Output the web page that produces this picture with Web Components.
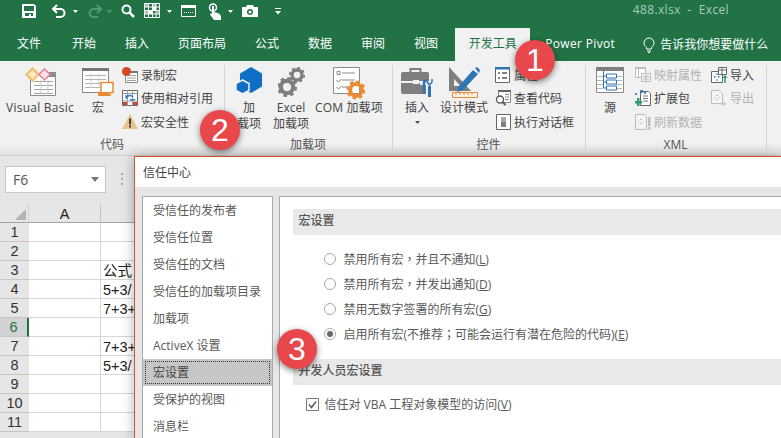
<!DOCTYPE html>
<html lang="zh-CN">
<head>
<meta charset="utf-8">
<title>488.xlsx - Excel</title>
<style>
    html, body {
        margin: 0;
        width: 781px;
        height: 438px;
        overflow: hidden;
        background: #e6e6e6;
        font-family: "Open Sans", "Noto Sans CJK SC", sans-serif;
        font-size: 12px;
    }
    .ribbon {
        display: flex;
        height: 94px;
        background: #f1f1f1;
    }
</style>
</head>
<body>
<xl-titlebar></xl-titlebar>
<xl-tabs></xl-tabs>
<div class="ribbon">
    <xl-group label="代码" style="width:224px">
        <xl-big icon="vb" w="68" style="margin-left:6px;letter-spacing:.25px">Visual Basic</xl-big>
        <xl-big icon="macro" w="32" style="margin-left:8px">宏</xl-big>
        <xl-col style="margin-left:8px">
            <xl-small icon="record">录制宏</xl-small>
            <xl-small icon="relative">使用相对引用</xl-small>
            <xl-small icon="warn">宏安全性</xl-small>
        </xl-col>
    </xl-group>
    <xl-group label="加载项" style="width:168px" sep>
        <xl-big icon="hex" w="40" style="margin-left:5px">加<br>载项</xl-big>
        <xl-big icon="gears" w="44">Excel<br>加载项</xl-big>
        <xl-big icon="com" w="70" style="margin-left:1px;letter-spacing:.15px">COM 加载项</xl-big>
    </xl-group>
    <xl-group label="控件" style="width:193px" sep>
        <xl-big icon="toolbox" w="40" caret style="margin-left:5px">插入</xl-big>
        <xl-big icon="design" w="48" style="margin-left:3px">设计模式</xl-big>
        <xl-col style="margin-left:7px">
            <xl-small icon="props">属性</xl-small>
            <xl-small icon="viewcode">查看代码</xl-small>
            <xl-small icon="dialog">执行对话框</xl-small>
        </xl-col>
    </xl-group>
    <xl-group label="XML" style="width:181px" sep>
        <xl-big icon="source" w="40" style="margin-left:5px">源</xl-big>
        <xl-col style="margin-left:5px;width:76px">
            <xl-small icon="mapprops" off>映射属性</xl-small>
            <xl-small icon="pack">扩展包</xl-small>
            <xl-small icon="refresh" off>刷新数据</xl-small>
        </xl-col>
        <xl-col>
            <xl-small icon="import">导入</xl-small>
            <xl-small icon="export" off>导出</xl-small>
        </xl-col>
    </xl-group>
    <xl-group style="flex:1" sep></xl-group>
</div>
<xl-sheet></xl-sheet>
<xl-trust-dialog></xl-trust-dialog>
<xl-badge n="1" style="left:515px;top:40px"></xl-badge>
<xl-badge n="2" style="left:200px;top:110px"></xl-badge>
<xl-badge n="3" style="left:277px;top:329px"></xl-badge>

<script>
const gear = (cx, cy, r, c) => `<circle cx="${cx}" cy="${cy}" r="${r * 0.62}" fill="none" stroke="${c}" stroke-width="${r * 0.42}"/><circle cx="${cx}" cy="${cy}" r="${r * 0.86}" fill="none" stroke="${c}" stroke-width="${r * 0.3}" stroke-dasharray="${r * 0.338} ${r * 0.338}"/>`;
const lines = (x, y, w, n, step, c) => Array.from({ length: n }, (_, i) => `<path d="M${x} ${y + i * step + .5}h${w}" stroke="${c}"/>`).join('');

const ICONS = {
    save: [14, 14, `<path fill="#fff" fill-rule="evenodd" d="M0 0h12l2 2v12H0zM2 2v5h10V2zM3 9v3h8V9zM7 10h2v2H7z"/>`],
    undo: [16, 14, `<path d="M6 1 2 5l4 4" fill="none" stroke="#fff" stroke-width="2"/><path d="M2 5h7.500a4 4 0 0 1 0 8H5" fill="none" stroke="#fff" stroke-width="2"/>`],
    redo: [16, 14, `<path d="m10 1 4 4-4 4" fill="none" stroke="#4f9a72" stroke-width="2"/><path d="M14 5H6.500a4 4 0 0 0 0 8H11" fill="none" stroke="#4f9a72" stroke-width="2"/>`],
    caret: [5, 3, `<path d="M0 0h5L2.500 3z" fill="#fff"/>`],
    caretDim: [5, 3, `<path d="M0 0h5L2.500 3z" fill="#4f9a72"/>`],
    search: [14, 14, `<circle cx="5.500" cy="5.500" r="4" fill="none" stroke="#fff" stroke-width="2"/><path d="m8.500 8.500 4.500 4.500" stroke="#fff" stroke-width="2.500"/>`],
    gridq: [16, 15, `<path fill="none" stroke="#fff" d="M.5.500h15v14H.5zM4.500.5v14M8.500.5v14M12 .5v14M.5 4h15M.5 7.500h15M.5 11h15"/><path fill="#fff" d="M5 8h3v3H5zM9 4h3v3H9z"/><path fill="#fff" opacity=".55" d="M1 1h3v3H1zM9 1h3v3H9zM13 8h2v3h-2zM1 8h3v3H1z"/>`],
    form: [15, 12, `<path fill="none" stroke="#fff" d="M.5.500h14v11H.5z"/><path fill="#fff" d="M0 0h15v3H0z"/><path d="M3 7.500h9" stroke="#fff" stroke-dasharray="1 1"/>`],
    touch: [13, 17, `<circle cx="5" cy="4.500" r="3.500" fill="none" stroke="#fff" stroke-width="1.500"/><path fill="#fff" d="M4 3h2v6l5 1.500L13 13v4H6L2 11.500 3 10l1 1z"/>`],
    camera: [16, 12, `<path fill="#fff" fill-rule="evenodd" d="M0 2h4l1-2h6l1 2h4v10H0zM8 4a3 3 0 1 0 0 6 3 3 0 0 0 0-6zM8 5.500a1.500 1.500 0 1 1 0 3 1.500 1.500 0 0 1 0-3z"/>`],
    custom: [6, 7, `<path fill="#fff" d="M0 0h6v1H0zM0 3h6L3 6.500z"/>`],
    bulb: [12, 16, `<path d="M3.500 10.500C2 9 1 8 1 6a5 5 0 0 1 10 0c0 2-1 3-2.500 4.500v1.500h-5zM4 14h4M5 15.500h2" fill="none" stroke="#fff"/>`],
    vb: [31, 29, `<path fill="#fff" stroke="#8b8b8b" d="M5.500 6.500h25v22h-25z"/><path fill="#8b8b8b" d="M22 5h9v5h-9z"/>${lines(9, 14, 19, 4, 4, '#a5a5a5')}<path d="M16 13v14M23 13v14" stroke="#c8c8c8"/><path fill="#f6d595" stroke="#edb962" stroke-width="1.500" d="M7.500 1 14 7.500 7.500 14 1 7.500z"/><path fill="#fff" d="M7.500 4 11 7.500 7.500 11 4 7.500z" opacity=".55"/><path fill="#fbe1e8" stroke="#e57f9b" stroke-width="1.500" d="M19.500 2 25 7.500 19.500 13 14 7.500z"/>`],
    macro: [32, 29, `<path fill="#fff" stroke="#8b8b8b" d="M.5 1.500h26v24H.5z"/><path fill="#777" d="M0 1h27v3H0z"/>${lines(3, 8, 21, 4, 4, '#b0b0b0')}<path d="M9 7v14M17 7v14" stroke="#d0d0d0"/><path fill="#fff" stroke="#ea8a35" stroke-width="1.500" d="M19 15.500h12v10h-3v3H17v-3h2z"/><path fill="#ea8a35" d="M16 25h11v4H16z"/>`],
    record: [16, 16, `<path fill="#fff" stroke="#8b8b8b" d="M3.500 4.500h12v11h-12z"/><path fill="#777" d="M8 4h8v2H8z"/>${lines(5, 8, 9, 3, 2.500, '#a0a0a0')}<circle cx="4.500" cy="4.500" r="4.500" fill="#d24726"/>`],
    relative: [16, 16, `<path fill="#fff" stroke="#666" d="M.5.500h15v15H.5z"/><path d="M5.500 0v16M10.500 0v16M0 3.500h16M0 11h16" stroke="#9a9a9a"/><path d="M4 8.500a4 4 0 0 1 7-1.500" fill="none" stroke="#2b7cd3" stroke-width="1.500"/><path fill="#2b7cd3" d="m3 5 4 1-3 3zM8 9h5v1.500H8z"/><path fill="#d24726" d="M1 12h4v3H1zM11 12h4v3h-4z"/>`],
    warn: [16, 15, `<path fill="#eac38a" d="M8 0 16 15H0z"/><path fill="#3c3c3c" d="M7 4.500h2v6H7zM7 11.500h2v2H7z"/>`],
    hex: [27, 27, `<path fill="#0f6fc6" d="M15 0 26 6.500v13L15 26 4 19.500v-13z"/><path fill="#0f6fc6" stroke="#f1f1f1" stroke-width="1.500" d="M6.500 13 13 16.500v7L6.500 27 0 23.500v-7z"/>`],
    gears: [27, 30, gear(19, 8, 8, '#7f7f7f') + gear(9, 20, 10, '#7f7f7f')],
    com: [32, 33, `<path fill="#fff" stroke="#8b8b8b" d="M.5.500h26v26H.5z"/><path d="M4 4.500h3v3H4z" fill="none" stroke="#8b8b8b"/><path d="M9 6h13M9 13h13M9 20h6" stroke="#8b8b8b"/><path d="m3.500 13 2 2 3-3M3.500 20l2 2 3-3" fill="none" stroke="#7f7f7f"/>${gear(23, 23, 9.500, '#ea8a35')}`],
    toolbox: [32, 31, `<path d="M9.500 5V2h10v3" fill="none" stroke="#7f7f7f" stroke-width="2"/><path fill="#7f7f7f" d="M2 5h25a2 2 0 0 1 1 2v7H0V7a2 2 0 0 1 2-2zM0 16h19v2h6v9H2a2 2 0 0 1-2-2z"/><path fill="#f1f1f1" d="M12 13h6v4h-6z"/><path d="M23 15v12" stroke="#2e75b6" stroke-width="2.500"/><path d="M22 14h3" stroke="#2e75b6" stroke-width="2"/><path d="M28.500 19v11" stroke="#2e75b6" stroke-width="3"/><path d="M26 12v3l2.500 3 2.500-3v-3" fill="none" stroke="#2e75b6" stroke-width="1.500"/>`],
    design: [31, 32, `<path fill="#7f7f7f" fill-rule="evenodd" d="M0 0 22 24H0zM5 12v7h6.500z"/><path fill="#2e75b6" d="m24 3 5 4-15 16-6 2 2-6z"/><path fill="#2e75b6" d="m26 1 2-1 3 3-1 3z"/><path fill="#f9f2e7" stroke="#ea8a35" d="M3.500 25.500h25v5h-25z"/><path d="M7 26v2M11 26v2M15 26v2M19 26v2M23 26v2" stroke="#ea8a35"/>`],
    props: [16, 16, `<path fill="#fff" stroke="#666" d="M.5.500h14v15H.5z"/><path fill="#2e75b6" d="M0 0h15v2.500H0z"/><path d="M3 6h2M3 11h2M7 6h5M7 11h5" stroke="#555" stroke-width="1.500"/>`],
    viewcode: [16, 16, `<path fill="#fff" stroke="#888" d="M3.500 .5h12v12h-12z"/><path fill="#666" d="M3 0h13v2H3z"/>${lines(10, 4, 4, 3, 2.500, '#888')}<circle cx="5" cy="9.500" r="3.500" fill="#fff" stroke="#555" stroke-width="1.300"/><path d="m7.500 12 3 3" stroke="#555" stroke-width="2"/>`],
    dialog: [15, 16, `<path fill="#fff" stroke="#666" d="M.5.500h14v15H.5z"/><path fill="#a9a9a9" d="M5 3h5v5H5z"/><path fill="#7f7f7f" d="M5 8h5v5H5z"/>`],
    source: [28, 26, `<path fill="#fff" stroke="#8b8b8b" d="M.5.500h27v25H.5z"/><path fill="#7f7f7f" d="M0 0h28v4H0z"/>${lines(19, 9, 7, 4, 4, '#b5b5b5')}${lines(1, 9, 6, 4, 4, '#b5b5b5')}<path d="M7.500 4v17M7.500 9H11M7.500 15H11M7.500 21H11" stroke="#2e75b6" fill="none"/><path d="M10.500 7h10v4h-10zM10.500 13h10v4h-10zM10.500 19h10v4h-10z" fill="#fff" stroke="#2e75b6"/>`],
    mapprops: [16, 15, `<path fill="#fff" stroke="#bdbdbd" d="M.5.500h10v10H.5z"/><path fill="#bdbdbd" d="M0 0h11v2H0z"/><path d="M3.500 2v8" stroke="#bdbdbd"/><path fill="#f1f1f1" stroke="#bdbdbd" d="M6.500 6.500h9v8h-9z"/><path d="M8 9.500h6M8 12h6M11 7v7" stroke="#bdbdbd"/>`],
    pack: [16, 16, `<path fill="#fff" stroke="#666" d="M5.500 1.500h8l2 2v12h-10z"/><path d="M8 6h5M8 8.500h5M8 11h5" stroke="#777"/><path fill="#2e75b6" d="M5 0h3v3H5zM0 3h2v2H0zM9 2h2v2H9z" opacity=".85"/><path fill="#2f9e6e" d="M2 8h2.500v3H7v2.500H4.500V16H2v-2.500H0V11h2z"/>`],
    refresh: [16, 16, `<path fill="#f4f4f4" stroke="#bdbdbd" d="M.5.500h9l2 2v13H.5z"/><path fill="#bdbdbd" d="M3 7h1v1H3zM8 7h1v1H8zM5 5h2v1H5zM5 9h2v1H5z"/><path fill="#bdbdbd" d="M13 3h2.500v9H13zM13 13h2.500v2.500H13z"/>`],
    import: [17, 16, `<path fill="#fff" stroke="#666" d="M.5 4.500h11v11H.5z"/><path fill="#2e75b6" d="M3 9h1.500v1.500H3zM7 9h1.500v1.500H7z"/><path d="M5 7h2M5 13h2" stroke="#2e75b6"/><path fill="#fff" stroke="#666" d="M7.500 .5h8v7h-8z"/><path d="M7 3h9M11 1v6" stroke="#666"/><path d="M14 16v-6" stroke="#2f9e6e" stroke-width="1.500"/><path fill="#2f9e6e" d="m11.500 11 2.500-3 2.500 3z"/>`],
    export: [16, 16, `<path fill="#f4f4f4" stroke="#bdbdbd" d="M.5.500h8l3 3v10H.5z"/><path fill="#bdbdbd" d="M3 7h1v1H3zM8 7h1v1H8zM5 5h2v1H5zM5 9h2v1H5z"/><path d="M8 14h6M12 11.500 14.500 14 12 16.500" fill="none" stroke="#bdbdbd"/>`]
};

const svgIcon = (name) => {
    const [w, h, body] = ICONS[name];
    return `<svg xmlns="http://www.w3.org/2000/svg" width="${w}" height="${h}" viewBox="0 0 ${w} ${h}" style="display:block;flex:none">${body}</svg>`;
};

class XlTitlebar extends HTMLElement {
    constructor() {
        super();
        this.attachShadow({ mode: 'open' });
    }

    connectedCallback() {
        const item = (name, left, top) => `<span style="margin-left:${left}px;margin-top:${top}px">${svgIcon(name)}</span>`;
        this.shadowRoot.innerHTML = `
            <style>
                :host {
                    display: flex;
                    align-items: flex-start;
                    height: 28px;
                    background: #217346;
                }
                span { display: block; flex: none; }
                .title {
                    margin-left: auto;
                    margin-right: 52px;
                    line-height: 19px;
                    color: #a9cbb8;
                    white-space: pre;
                    letter-spacing: .35px;
                }
            </style>
            ${item('save', 22, 4)}${item('undo', 15, 4)}${item('caret', 6, 10)}
            ${item('redo', 9, 4)}${item('caretDim', 4, 10)}${item('search', 9, 4)}
            ${item('gridq', 9, 3)}${item('caret', 7, 10)}${item('form', 9, 5)}
            ${item('touch', 12, 3)}${item('caret', 7, 10)}${item('camera', 9, 5)}
            ${item('custom', 17, 8)}
            <span class="title">488.xlsx  -  Excel</span>
        `;
    }
}

class XlTabs extends HTMLElement {
    constructor() {
        super();
        this.attachShadow({ mode: 'open' });
    }

    connectedCallback() {
        const names = ['文件', '开始', '插入', '页面布局', '公式', '数据', '审阅', '视图'];
        this.shadowRoot.innerHTML = `
            <style>
                :host {
                    display: flex;
                    height: 33px;
                    background: #217346;
                    color: #fff;
                    line-height: 32px;
                    padding-left: 2.5px;
                }
                div { padding: 0 14.5px; flex: none; }
                .first { margin-right: 2px; }
                .active {
                    margin: 0 0 0 2.5px;
                    padding: 0 13.5px;
                    background: #f1f1f1;
                    color: #217346;
                }
                .pivot { padding: 0 0 0 15px; letter-spacing: .35px; }
                .tell {
                    display: flex;
                    align-items: center;
                    gap: 5px;
                    margin-left: 28px;
                    padding: 0;
                }
            </style>
            ${names.map((n, i) => `<div class="${i ? '' : 'first'}">${n}</div>`).join('')}
            <div class="active">开发工具</div>
            <div class="pivot">Power Pivot</div>
            <div class="tell">${svgIcon('bulb')}<span>告诉我你想要做什么</span></div>
        `;
    }
}

class XlGroup extends HTMLElement {
    constructor() {
        super();
        this.attachShadow({ mode: 'open' });
    }

    connectedCallback() {
        this.shadowRoot.innerHTML = `
            <style>
                :host {
                    display: flex;
                    flex-direction: column;
                    flex: none;
                    padding-top: 5px;
                    box-sizing: border-box;
                    color: #444;
                    background: linear-gradient(#f1f1f1 88%, #e4e4e4);
                    position: relative;
                }
                :host([sep])::before {
                    content: "";
                    display: block;
                    position: absolute;
                    left: 0;
                    top: 4px;
                    bottom: 5px;
                    width: 1px;
                    background: #d4d4d4;
                }
                .body { display: flex; height: 71px; }
                .label { height: 16px; line-height: 16px; text-align: center; color: #555; }
            </style>
            <div class="body"><slot></slot></div>
            <div class="label">${this.getAttribute('label') || ''}</div>
        `;
    }
}

class XlBig extends HTMLElement {
    constructor() {
        super();
        this.attachShadow({ mode: 'open' });
    }

    connectedCallback() {
        const caret = this.hasAttribute('caret')
            ? `<svg width="5" height="3" style="display:block;margin-top:5px"><path d="M0 0h5L2.500 3z" fill="#555"/></svg>` : '';
        this.shadowRoot.innerHTML = `
            <style>
                :host {
                    display: flex;
                    flex-direction: column;
                    align-items: center;
                    flex: none;
                    width: ${this.getAttribute('w')}px;
                    text-align: center;
                    white-space: nowrap;
                    line-height: 16px;
                }
                .icon {
                    height: 34px;
                    display: flex;
                    align-items: flex-start;
                    padding-top: 1px;
                    box-sizing: border-box;
                }
            </style>
            <div class="icon">${svgIcon(this.getAttribute('icon'))}</div>
            <div><slot></slot></div>
            ${caret}
        `;
    }
}

class XlCol extends HTMLElement {
    constructor() {
        super();
        this.attachShadow({ mode: 'open' });
        this.shadowRoot.innerHTML = `
            <style>
                :host { display: flex; flex-direction: column; flex: none; margin-top: -3px; }
            </style>
            <slot></slot>
        `;
    }
}

class XlSmall extends HTMLElement {
    constructor() {
        super();
        this.attachShadow({ mode: 'open' });
    }

    connectedCallback() {
        this.shadowRoot.innerHTML = `
            <style>
                :host {
                    display: flex;
                    align-items: center;
                    height: 23.5px;
                    gap: 3px;
                    white-space: nowrap;
                }
                :host([off]) { color: #b3b3b3; }
                .icon { width: 16px; display: flex; justify-content: center; flex: none; }
            </style>
            <span class="icon">${svgIcon(this.getAttribute('icon'))}</span>
            <slot></slot>
        `;
    }
}

class XlSheet extends HTMLElement {
    constructor() {
        super();
        this.attachShadow({ mode: 'open' });
    }

    connectedCallback() {
        const cells = { 3: '公式', 4: '5+3/', 5: '7+3+', 7: '7+3+', 8: '5+3/' };
        let rows = '';
        for (let r = 1; r <= 11; r++) {
            rows += `<div class="rh${r === 6 ? ' sel' : ''}">${r}</div><div class="c"></div><div class="c t">${cells[r] || ''}</div>`;
        }
        this.shadowRoot.innerHTML = `
            <style>
                :host {
                    display: block;
                    height: 283px;
                    overflow: hidden;
                    background: #e6e6e6;
                    border-top: 1px solid #cfcfcf;
                    box-sizing: border-box;
                    font-family: "Liberation Sans", "Noto Sans CJK SC", sans-serif;
                    color: #222;
                }
                .bar {
                    display: flex;
                    align-items: flex-start;
                    height: 48px;
                    padding: 10px 0 0 5px;
                    box-sizing: border-box;
                }
                .name {
                    display: flex;
                    align-items: center;
                    justify-content: space-between;
                    width: 101px;
                    height: 27px;
                    box-sizing: border-box;
                    padding: 0 5px 0 7px;
                    background: #fff;
                    border: 1px solid #c6c6c6;
                    color: #555;
                    font: 14px "Open Sans", sans-serif;
                }
                .name i {
                    border: 4px solid transparent;
                    border-top: 5px solid #777;
                    border-bottom: 0;
                    margin-right: 1px;
                }
                .dots {
                    margin: 7px 0 0 15px;
                    width: 2px;
                    height: 12px;
                    background: repeating-linear-gradient(#aaa 0 2px, transparent 2px 5px);
                }
                .grid {
                    display: grid;
                    grid-template-columns: 29px 72px 100px;
                    grid-auto-rows: 19px;
                    background: #fff;
                    width: 201px;
                }
                .corner, .ch {
                    height: 19px;
                    box-sizing: border-box;
                    background: #e6e6e6;
                    border-bottom: 1px solid #a5a5a5;
                }
                .corner { display: flex; justify-content: flex-end; align-items: flex-end; border-right: 1px solid #d0d0d0; }
                .corner svg { display: block; margin: 0 2px 2px 0; }
                .ch {
                    text-align: center;
                    line-height: 20px;
                    font-size: 14.5px;
                    border-right: 1px solid #c4c4c4;
                }
                .rh {
                    background: #e6e6e6;
                    border-bottom: 1px solid #c6c6c6;
                    box-sizing: border-box;
                    text-align: center;
                    line-height: 19px;
                    font-size: 14.5px;
                    color: #333;
                }
                .sel {
                    background: #d2d2d2;
                    color: #217346;
                    border-right: 2px solid #217346;
                }
                .c {
                    border-right: 1px solid #d6d6d6;
                    border-bottom: 1px solid #d6d6d6;
                    box-sizing: border-box;
                }
                .t {
                    font-size: 14.5px;
                    line-height: 20px;
                    padding-left: 2px;
                    white-space: nowrap;
                    overflow: hidden;
                }
            </style>
            <div class="bar">
                <div class="name"><span>F6</span><i></i></div>
                <div class="dots"></div>
            </div>
            <div class="grid">
                <div class="corner"><svg width="11" height="11"><path d="M11 0v11H0z" fill="#b5b5b5"/></svg></div>
                <div class="ch">A</div>
                <div class="ch"></div>
                ${rows}
            </div>
        `;
    }
}

class XlTrustDialog extends HTMLElement {
    constructor() {
        super();
        this.attachShadow({ mode: 'open' });
    }

    connectedCallback() {
        const nav = ['受信任的发布者', '受信任位置', '受信任的文档', '受信任的加载项目录', '加载项', 'ActiveX 设置', '宏设置', '受保护的视图', '消息栏'];
        const p = (c) => `<span class="tc" lang="zh-Hant">${c}</span>`;
        this.shadowRoot.innerHTML = `
            <style>
                :host {
                    display: block;
                    position: absolute;
                    left: 134px;
                    top: 156px;
                    width: 647px;
                    height: 282px;
                    box-sizing: border-box;
                    background: #e6e6e6;
                    border: 1px solid #d9562b;
                    border-width: 1px 0 0 1px;
                    box-shadow: 0 0 12px rgba(0, 0, 0, .3);
                    color: #595959;
                    font-family: "Open Sans", "Noto Sans CJK SC", sans-serif;
                    font-size: 12px;
                }
                .head {
                    height: 30px;
                    padding-left: 8px;
                    background: #fff;
                    color: #444;
                    line-height: 31px;
                }
                .body {
                    display: flex;
                    gap: 6px;
                    padding: 9px 0 0 6.5px;
                }
                nav {
                    width: 131px;
                    height: 242px;
                    overflow: hidden;
                    flex: none;
                    background: #fff;
                    border: 1px solid #ababab;
                    border-bottom: 0;
                    box-sizing: border-box;
                }
                nav div {
                    height: 27px;
                    line-height: 27px;
                    padding-left: 10.5px;
                    box-sizing: border-box;
                }
                nav .on {
                    background: #c6c6c6;
                    color: #444;
                    outline: 1px dotted #333;
                    outline-offset: -3px;
                }
                main {
                    flex: 1;
                    height: 242px;
                    background: #fff;
                    border: 1px solid #ababab;
                    border-width: 1px 0 0 1px;
                    box-sizing: border-box;
                    padding: 12px 0 0 13px;
                }
                h3 {
                    margin: 0;
                    height: 26px;
                    padding-left: 6px;
                    background: #e9e9e9;
                    font: inherit;
                    font-weight: 500;
                    line-height: 24px;
                    color: #555;
                }
                .radios { padding: 11px 0 13px 31px; }
                .tc { font-family: "Noto Sans CJK TC", sans-serif; }
                .check { padding: 10px 0 0 13px; }
            </style>
            <div class="head">信任中心</div>
            <div class="body">
                <nav>${nav.map((n) => `<div class="${n === '宏设置' ? 'on' : ''}">${n}</div>`).join('')}</nav>
                <main>
                    <h3>宏设置</h3>
                    <div class="radios">
                        <xl-radio>禁用所有宏${p('，')}并且不通知(<u>L</u>)</xl-radio>
                        <xl-radio>禁用所有宏${p('，')}并发出通知(<u>D</u>)</xl-radio>
                        <xl-radio>禁用无数字签署的所有宏(<u>G</u>)</xl-radio>
                        <xl-radio checked>启用所有宏(不推荐${p('；')}可能会运行有潜在危险的代码)(<u>E</u>)</xl-radio>
                    </div>
                    <h3>开发人员宏设置</h3>
                    <div class="check"><xl-check>信任对 VBA 工程对象模型的访问(<u>V</u>)</xl-check></div>
                </main>
            </div>
        `;
    }
}

class XlRadio extends HTMLElement {
    constructor() {
        super();
        this.attachShadow({ mode: 'open' });
        this.shadowRoot.innerHTML = `
            <style>
                :host {
                    display: flex;
                    align-items: center;
                    gap: 8px;
                    height: 25px;
                    white-space: nowrap;
                }
                i {
                    display: flex;
                    align-items: center;
                    justify-content: center;
                    flex: none;
                    width: 10px;
                    height: 10px;
                    border: 1px solid #a8a8a8;
                    border-radius: 50%;
                }
                :host([checked]) i::after {
                    content: "";
                    width: 6px;
                    height: 6px;
                    border-radius: 50%;
                    background: #666;
                }
            </style>
            <i></i><span><slot></slot></span>
        `;
    }
}

class XlCheck extends HTMLElement {
    constructor() {
        super();
        this.attachShadow({ mode: 'open' });
        this.shadowRoot.innerHTML = `
            <style>
                :host { display: flex; align-items: center; gap: 6px; white-space: nowrap; }
                svg { display: block; flex: none; }
            </style>
            <svg width="13" height="13"><path d="M.5.500h12v12H.5z" fill="#fff" stroke="#777"/><path d="m3 6.500 2.500 3L10 3.500" fill="none" stroke="#555" stroke-width="1.400"/></svg>
            <span><slot></slot></span>
        `;
    }
}

class XlBadge extends HTMLElement {
    constructor() {
        super();
        this.attachShadow({ mode: 'open' });
    }

    connectedCallback() {
        this.shadowRoot.innerHTML = `
            <style>
                :host {
                    display: flex;
                    align-items: center;
                    justify-content: center;
                    position: absolute;
                    width: 40px;
                    height: 40px;
                    border-radius: 50%;
                    background: #e8474c;
                    box-shadow: 0 2px 6px rgba(0, 0, 0, .5);
                    color: #fff;
                    font: 32px "Liberation Sans", sans-serif;
                }
            </style>
            ${this.getAttribute('n')}
        `;
    }
}

customElements.define('xl-titlebar', XlTitlebar);
customElements.define('xl-tabs', XlTabs);
customElements.define('xl-group', XlGroup);
customElements.define('xl-big', XlBig);
customElements.define('xl-col', XlCol);
customElements.define('xl-small', XlSmall);
customElements.define('xl-sheet', XlSheet);
customElements.define('xl-trust-dialog', XlTrustDialog);
customElements.define('xl-radio', XlRadio);
customElements.define('xl-check', XlCheck);
customElements.define('xl-badge', XlBadge);
</script>
</body>
</html>
